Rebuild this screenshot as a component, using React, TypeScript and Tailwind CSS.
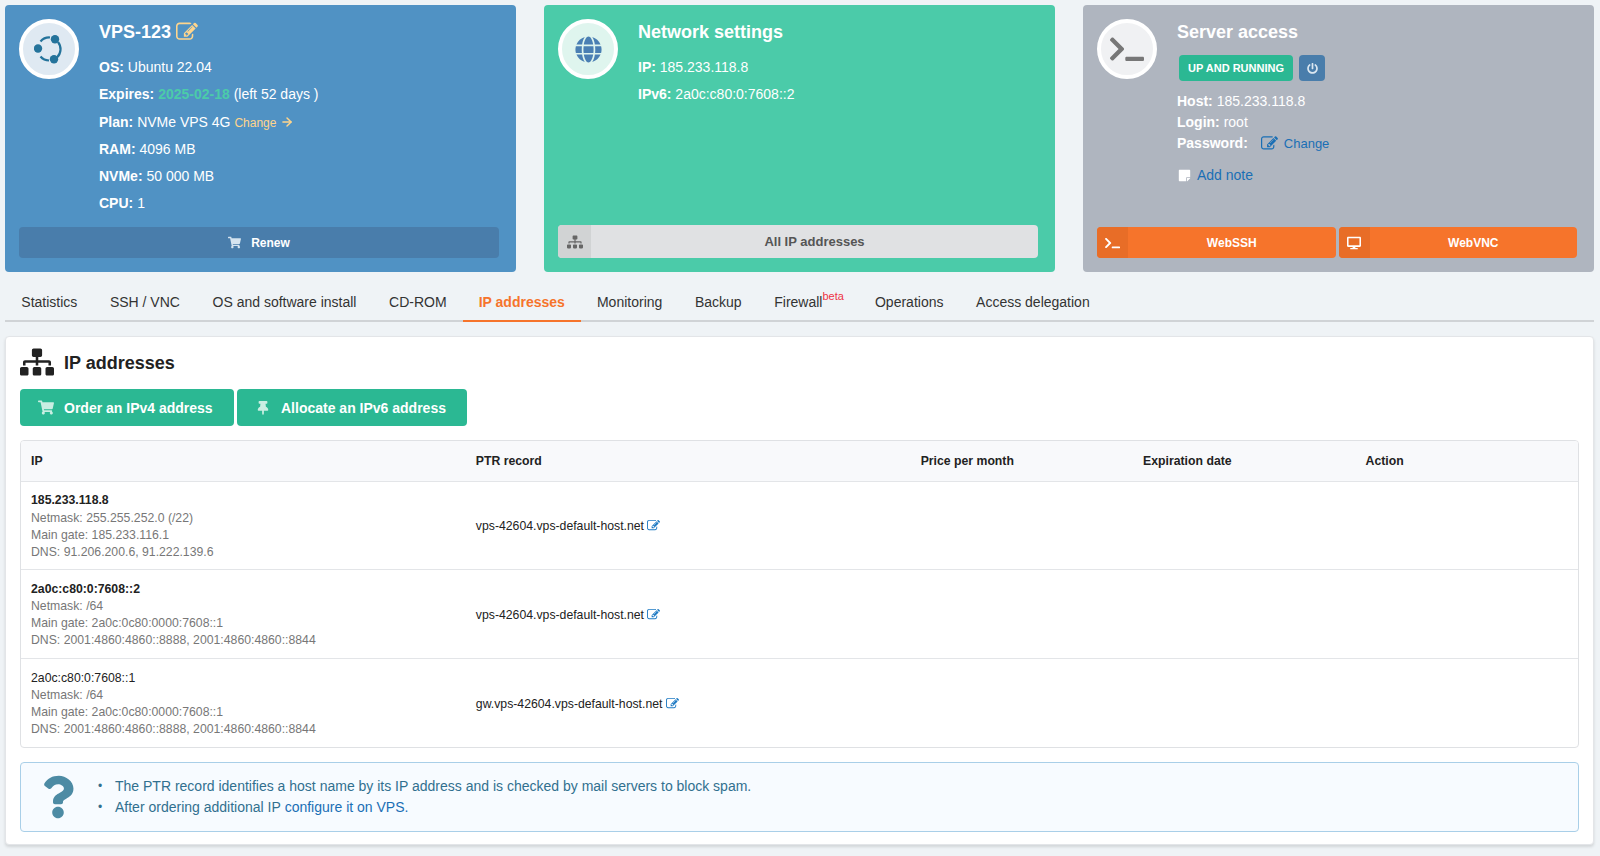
import { ArrowRight } from "lucide-react";
import {
  FaDesktop,
  FaGlobe,
  FaPowerOff,
  FaQuestion,
  FaShoppingCart,
  FaSitemap,
  FaStickyNote,
  FaTerminal,
  FaThumbtack,
} from "react-icons/fa";

const tabs = [
  "Statistics",
  "SSH / VNC",
  "OS and software install",
  "CD-ROM",
  "IP addresses",
  "Monitoring",
  "Backup",
  "Firewall",
  "Operations",
  "Access delegation",
];

const rows = [
  {
    ip: "185.233.118.8",
    bold: true,
    info: ["Netmask: 255.255.252.0 (/22)", "Main gate: 185.233.116.1", "DNS: 91.206.200.6, 91.222.139.6"],
    ptr: "vps-42604.vps-default-host.net",
  },
  {
    ip: "2a0c:c80:0:7608::2",
    bold: true,
    info: ["Netmask: /64", "Main gate: 2a0c:0c80:0000:7608::1", "DNS: 2001:4860:4860::8888, 2001:4860:4860::8844"],
    ptr: "vps-42604.vps-default-host.net",
  },
  {
    ip: "2a0c:c80:0:7608::1",
    bold: false,
    info: ["Netmask: /64", "Main gate: 2a0c:0c80:0000:7608::1", "DNS: 2001:4860:4860::8888, 2001:4860:4860::8844"],
    ptr: "gw.vps-42604.vps-default-host.net",
  },
];

// pencil in a rounded square, heavier than the one in react-icons
function EditIcon({ className }: { className: string }) {
  return (
    <svg viewBox="0 0 1792 1792" fill="currentColor" className={className}>
      <path d="M888 1184l116-116-152-152-116 116v56h96v96h56zm440-720q-16-16-33 1l-350 350q-17 17-1 33t33-1l350-350q17-17 1-33zm80 594v190q0 119-84.5 203.5t-203.5 84.5h-832q-119 0-203.5-84.5t-84.5-203.5v-832q0-119 84.5-203.5t203.5-84.5h832q63 0 117 25 15 7 18 23 3 17-9 29l-49 49q-14 14-32 8-23-6-45-6h-832q-66 0-113 47t-47 113v832q0 66 47 113t113 47h832q66 0 113-47t47-113v-126q0-13 9-22l64-64q15-15 35-7t20 29zm-96-738l288 288-672 672h-288v-288zm444 132l-92 92-288-288 92-92q28-28 68-28t68 28l152 152q28 28 28 68t-28 68z" />
    </svg>
  );
}

function UbuntuIcon() {
  return (
    <svg viewBox="-15 -15 30 30" className="h-[30px] w-[30px] text-[#24739b]" fill="none">
      <g stroke="currentColor" strokeWidth="2.2">
        <path d="M9 -7 A11.5 11.5 0 0 1 8 8.5" />
        <path d="M-8.5 -7.5 A11.5 11.5 0 0 1 1 -11.5" />
        <path d="M-8.5 7.5 A11.5 11.5 0 0 0 0 11.5" />
      </g>
      <circle cx="6" cy="-9.8" r="4.2" fill="currentColor" />
      <circle cx="-11" cy="-0.5" r="4.2" fill="currentColor" />
      <circle cx="5" cy="10.2" r="4.2" fill="currentColor" />
    </svg>
  );
}

function Avatar({ bg, children }: { bg: string; children: React.ReactNode }) {
  return (
    <div className={`flex h-[60px] w-[60px] shrink-0 items-center justify-center rounded-full border-4 border-white ${bg}`}>
      {children}
    </div>
  );
}

function Row({ label, children }: { label: string; children: React.ReactNode }) {
  return (
    <div className="h-[27.3px] leading-[27px]">
      <b>{label}</b> {children}
    </div>
  );
}

function OrangeButton({ icon, label }: { icon: React.ReactNode; label: string }) {
  return (
    <button className="flex h-[31px] flex-1 items-center overflow-hidden rounded-[4px] bg-[#f6742b] text-[12px] font-bold text-white">
      <span className="flex h-full w-[31px] items-center justify-center bg-[#e86d27]">{icon}</span>
      <span className="flex-1 text-center">{label}</span>
    </button>
  );
}

export default function App() {
  return (
    <div className="min-h-[856px] bg-[#eff3f6] pl-[5px] pr-[6px] pt-[5px] font-['Liberation_Sans',Arial,sans-serif] text-[14px] text-[#222]">
      <div className="grid grid-cols-3 gap-[28px]">
        {/* VPS */}
        <div className="flex h-[267px] flex-col rounded-[4px] bg-[#5092c4] pb-[14px] pl-[14px] pr-[17px] pt-[14px] text-white">
          <div className="flex flex-1 gap-[20px]">
            <Avatar bg="bg-[#dfe9f2]">
              <UbuntuIcon />
            </Avatar>
            <div>
              <div className="mb-[9px] flex h-[26px] items-center gap-[5px] text-[18px] font-bold">
                VPS-123 <EditIcon className="h-[22px] w-[22px] text-[#ffd58c]" />
              </div>
              <Row label="OS:">Ubuntu 22.04</Row>
              <Row label="Expires:">
                <b className="text-[#4bcba9]">2025-02-18</b> (left 52 days )
              </Row>
              <Row label="Plan:">
                NVMe VPS 4G{" "}
                <span className="text-[12px] text-[#ffd58c]">
                  Change <ArrowRight strokeWidth={2.5} className="inline h-[14px] w-[14px] align-[-2px]" />
                </span>
              </Row>
              <Row label="RAM:">4096 MB</Row>
              <Row label="NVMe:">50 000 MB</Row>
              <Row label="CPU:">1</Row>
            </div>
          </div>
          <button className="flex h-[31px] items-center justify-center gap-[10px] rounded-[4px] bg-[#497dab] text-[12px] font-bold text-white">
            <FaShoppingCart className="h-[13px] w-[13px] text-[#d5e4f0]" /> Renew
          </button>
        </div>

        {/* Network */}
        <div className="flex h-[267px] flex-col rounded-[4px] bg-[#4bcba9] pb-[14px] pl-[14px] pr-[17px] pt-[14px] text-white">
          <div className="flex flex-1 gap-[20px]">
            <Avatar bg="bg-[#dff5ee]">
              <FaGlobe className="h-[27px] w-[27px] text-[#4a7fb3]" />
            </Avatar>
            <div>
              <div className="mb-[9px] flex h-[26px] items-center text-[18px] font-bold">Network settings</div>
              <Row label="IP:">185.233.118.8</Row>
              <Row label="IPv6:">2a0c:c80:0:7608::2</Row>
            </div>
          </div>
          <button className="flex h-[33px] items-center overflow-hidden rounded-[4px] bg-[#e0e1e3] text-[13px] font-bold text-[#555]">
            <span className="flex h-full w-[33px] items-center justify-center bg-[#d1d3d4]">
              <FaSitemap className="h-[16px] w-[16px] text-[#666]" />
            </span>
            <span className="flex-1 text-center">All IP addresses</span>
          </button>
        </div>

        {/* Access */}
        <div className="flex h-[267px] flex-col rounded-[4px] bg-[#afb5bf] pb-[14px] pl-[14px] pr-[17px] pt-[14px] text-white">
          <div className="flex flex-1 gap-[20px]">
            <Avatar bg="bg-[#f0f1f3]">
              <FaTerminal className="h-[30px] w-[34px] text-[#777]" />
            </Avatar>
            <div>
              <div className="mb-[10px] flex h-[26px] items-center text-[18px] font-bold">Server access</div>
              <div className="ml-[2px] flex gap-[6px]">
                <span className="flex h-[26px] w-[114px] items-center justify-center rounded-[4px] bg-[#2bb893] text-[11px] font-bold uppercase">
                  Up and running
                </span>
                <span className="flex h-[26px] w-[26px] items-center justify-center rounded-[4px] bg-[#497dab]">
                  <FaPowerOff className="h-[11px] w-[11px] text-[#dbe7f1]" />
                </span>
              </div>
              <div className="mt-[10px] h-[21px] leading-[21px]">
                <b>Host:</b> 185.233.118.8
              </div>
              <div className="h-[21px] leading-[21px]">
                <b>Login:</b> root
              </div>
              <div className="flex h-[21px] items-center leading-[21px]">
                <b>Password:</b>
                <EditIcon className="ml-[13px] h-[17px] w-[17px] text-[#1a6fb5]" />
                <span className="ml-[6px] text-[13px] text-[#1a6fb5]">Change</span>
              </div>
              <div className="ml-[1px] mt-[11px] flex h-[21px] items-center gap-[6px] text-[#1a6fb5]">
                <FaStickyNote className="h-[13px] w-[13px] text-white" /> Add note
              </div>
            </div>
          </div>
          <div className="flex gap-[3px]">
            <OrangeButton icon={<FaTerminal className="h-[12px] w-[15px]" />} label="WebSSH" />
            <OrangeButton icon={<FaDesktop className="h-[14px] w-[14px]" />} label="WebVNC" />
          </div>
        </div>
      </div>

      {/* Tabs */}
      <div className="mt-[10px] flex h-[40px] border-b-2 border-[#d0d3d6]">
        {tabs.map((t) => (
          <div
            key={t}
            className={
              t === "IP addresses"
                ? "-mb-[2px] h-[40px] border-b-2 border-[#f6742b] px-[15.8px] pt-[10px] font-bold text-[#f6742b]"
                : "h-[40px] px-[16.3px] pt-[10px] text-[#333]"
            }
          >
            {t}
            {t === "Firewall" && <sup className="-top-[7px] -mr-[1.5px] text-[11px] text-[#ee3344]">beta</sup>}
          </div>
        ))}
      </div>

      {/* Panel */}
      <div className="mt-[14px] h-[509px] rounded-[4px] border border-[#e3e5e8] bg-white px-[14px] pt-[11px] shadow-[0_2px_3px_rgba(0,0,0,0.12)]">
        <div className="flex h-[28px] items-center gap-[10px]">
          <FaSitemap className="h-[28px] w-[34px] text-[#222]" />
          <h2 className="pt-[2px] text-[18px] font-bold">IP addresses</h2>
        </div>
        <div className="mt-[13px] flex gap-[3px] text-[14px] font-bold text-white">
          <button className="flex h-[37px] w-[214px] items-center rounded-[4px] bg-[#2bb893] pl-[18px]">
            <FaShoppingCart className="h-[15px] w-[16px] text-[#c9eee2]" />
            <span className="ml-[10px] pt-[1px]">Order an IPv4 address</span>
          </button>
          <button className="flex h-[37px] w-[230px] items-center rounded-[4px] bg-[#2bb893] pl-[20px]">
            <FaThumbtack className="h-[14px] w-[12px] text-[#c9eee2]" />
            <span className="ml-[12px] pt-[1px]">Allocate an IPv6 address</span>
          </button>
        </div>

        <div className="mt-[14px] overflow-hidden rounded-[4px] border border-[#dfe1e4]">
          <table className="w-full table-fixed border-collapse text-[12.25px]">
            <thead>
              <tr className="h-[40px] bg-[#f8f9fb] text-left">
                <th className="w-[28.57%] px-[10px] font-bold">IP</th>
                <th className="w-[28.57%] px-[10px] font-bold">PTR record</th>
                <th className="px-[10px] font-bold">Price per month</th>
                <th className="px-[10px] font-bold">Expiration date</th>
                <th className="px-[10px] font-bold">Action</th>
              </tr>
            </thead>
            <tbody>
              {rows.map((r) => (
                <tr key={r.ip} className="h-[88.6px] border-t border-[#e3e5e8]">
                  <td className="px-[10px] pb-[8px] pt-[10.6px] leading-[17.1px] text-[#777]">
                    <div className={r.bold ? "font-bold text-[#222]" : "text-[#222]"}>{r.ip}</div>
                    {r.info.map((l) => (
                      <div key={l}>{l}</div>
                    ))}
                  </td>
                  <td className="px-[10px] pt-[2px]">
                    {r.ptr} <EditIcon className="inline h-[13px] w-[13px] align-[-2px] text-[#1f7bc4]" />
                  </td>
                  <td />
                  <td />
                  <td />
                </tr>
              ))}
            </tbody>
          </table>
        </div>

        <div className="mt-[14px] flex h-[70px] items-center rounded-[4px] border border-[#a9cfe8] bg-[#f7fbff] text-[#31708f]">
          <FaQuestion className="ml-[21px] h-[44px] w-[32px] text-[#4d8ba4]" />
          <ul className="ml-[24px] pt-[1px] leading-[21px]">
            <li className="flex items-center">
              <span className="w-[17px] text-[12px]">•</span>The PTR record identifies a host name by its IP address and is checked by mail servers to block spam.
            </li>
            <li className="flex items-center">
              <span className="w-[17px] text-[12px]">•</span>After ordering additional IP&nbsp;<span className="text-[#1a6fb5]">configure it on VPS.</span>
            </li>
          </ul>
        </div>
      </div>
    </div>
  );
}
